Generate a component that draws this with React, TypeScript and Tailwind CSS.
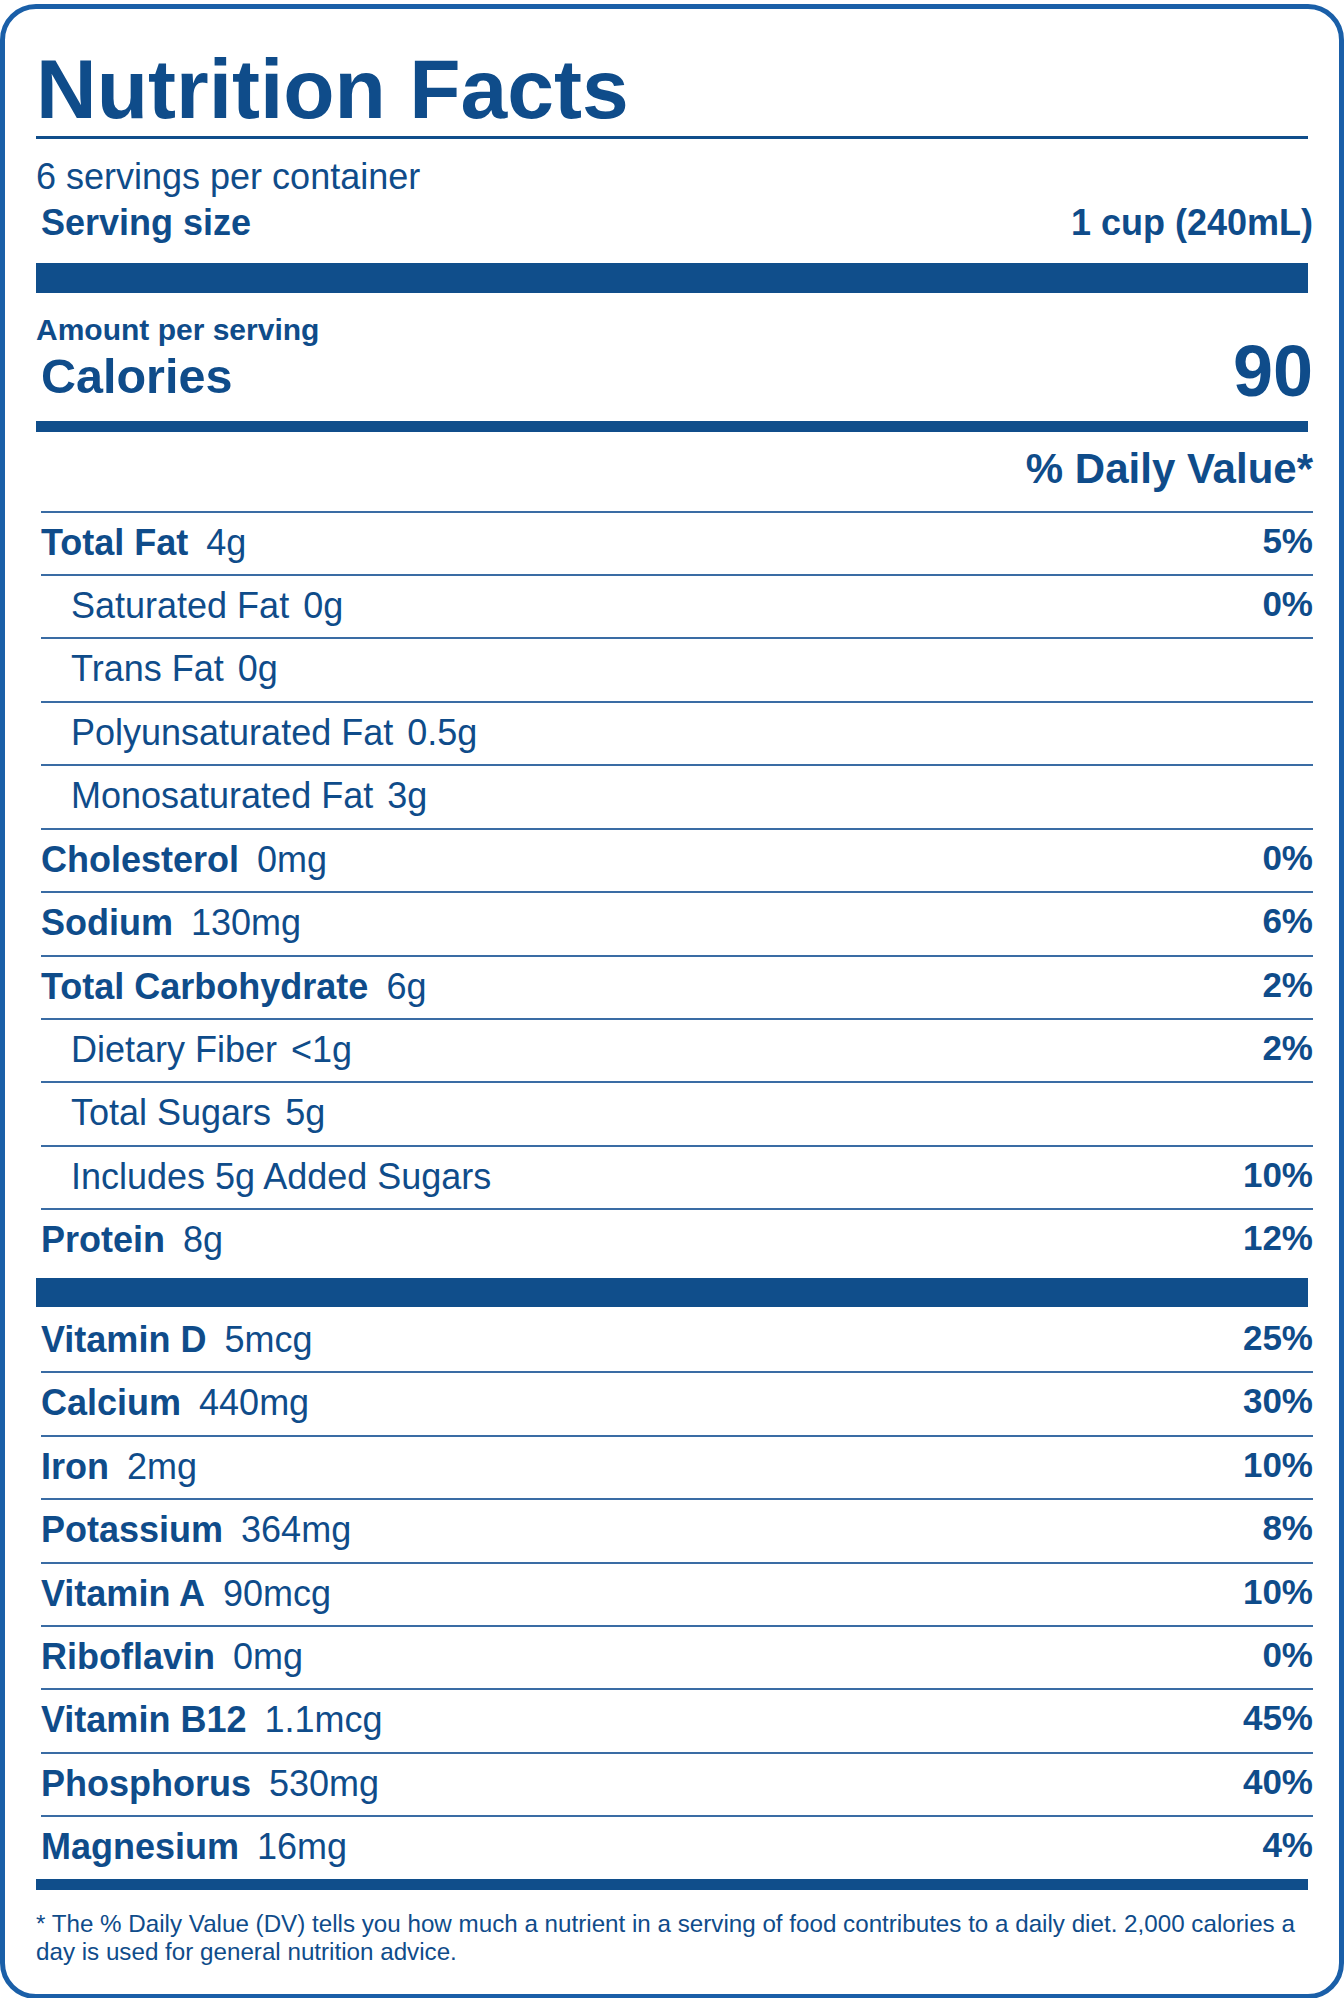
import React from "react";

type Row = { name: string; amt?: string; dv?: string; bold?: boolean; indent?: boolean };

const nutrients: Row[] = [
  { name: "Total Fat", amt: "4g", dv: "5%", bold: true },
  { name: "Saturated Fat", amt: "0g", dv: "0%", indent: true },
  { name: "Trans Fat", amt: "0g", indent: true },
  { name: "Polyunsaturated Fat", amt: "0.5g", indent: true },
  { name: "Monosaturated Fat", amt: "3g", indent: true },
  { name: "Cholesterol", amt: "0mg", dv: "0%", bold: true },
  { name: "Sodium", amt: "130mg", dv: "6%", bold: true },
  { name: "Total Carbohydrate", amt: "6g", dv: "2%", bold: true },
  { name: "Dietary Fiber", amt: "<1g", dv: "2%", indent: true },
  { name: "Total Sugars", amt: "5g", indent: true },
  { name: "Includes 5g Added Sugars", dv: "10%", indent: true },
  { name: "Protein", amt: "8g", dv: "12%", bold: true },
];

const vitamins: Row[] = [
  { name: "Vitamin D", amt: "5mcg", dv: "25%", bold: true },
  { name: "Calcium", amt: "440mg", dv: "30%", bold: true },
  { name: "Iron", amt: "2mg", dv: "10%", bold: true },
  { name: "Potassium", amt: "364mg", dv: "8%", bold: true },
  { name: "Vitamin A", amt: "90mcg", dv: "10%", bold: true },
  { name: "Riboflavin", amt: "0mg", dv: "0%", bold: true },
  { name: "Vitamin B12", amt: "1.1mcg", dv: "45%", bold: true },
  { name: "Phosphorus", amt: "530mg", dv: "40%", bold: true },
  { name: "Magnesium", amt: "16mg", dv: "4%", bold: true },
];

function NRow({ r, last }: { r: Row; last: boolean }) {
  return (
    <div
      className={
        "ml-[5px] -mr-[5px] flex items-start justify-between " +
        (last ? "h-[61.45px]" : "h-[63.45px] border-b-2 border-[#3a6ca4]")
      }
    >
      <div className={"text-[36px] leading-[60px] whitespace-nowrap " + (r.indent ? "pl-[30px]" : "")}>
        {r.bold ? (
          <>
            <span className="font-bold">{r.name}</span> <span className="ml-2">{r.amt}</span>
          </>
        ) : (
          <>
            <span>{r.name}</span>
            {r.amt ? (
              <>
                {" "}
                <span className="ml-[4px]">{r.amt}</span>
              </>
            ) : null}
          </>
        )}
      </div>
      {r.dv ? <div className="text-[35px] leading-[55px] font-bold">{r.dv}</div> : null}
    </div>
  );
}

export default function App() {
  return (
    <div
      className="mt-[4px] w-[1344px] rounded-[36px] border-[5px] border-[#1a5fa8] bg-white px-[31px] pt-[38px] pb-[28px] text-[#0f4c8a]"
      style={{ fontFamily: '"Liberation Sans", Arial, Helvetica, sans-serif' }}
    >
      <h1 className="text-[84px] leading-[84px] font-bold whitespace-nowrap">Nutrition Facts</h1>
      <div className="mt-[5px] h-[3px] bg-[#104e8b]" />
      <div className="mt-[18px] text-[36px] leading-[40px]">6 servings per container</div>
      <div className="ml-[5px] -mr-[5px] mt-[6px] flex justify-between text-[36px] leading-[40px] font-bold">
        <span>Serving size</span>
        <span>1 cup (240mL)</span>
      </div>
      <div className="mt-[20px] h-[30px] bg-[#104e8b]" />
      <div className="mt-[23px] text-[30px] leading-[28px] font-bold">Amount per serving</div>
      <div className="ml-[5px] -mr-[5px] flex items-end justify-between font-bold">
        <span className="text-[48.5px] leading-[44px]">Calories</span>
        <span className="text-[72px] leading-[54px]">90</span>
      </div>
      <div className="mt-[23px] h-[11px] bg-[#104e8b]" />
      <div className="ml-[5px] -mr-[5px] mt-[13px] border-b-2 border-[#3a6ca4] pb-[17.5px] text-right text-[42px] leading-[48px] font-bold">
        % Daily Value*
      </div>
      <div>
        {nutrients.map((r, i) => (
          <NRow key={r.name} r={r} last={i === nutrients.length - 1} />
        ))}
      </div>
      <div className="mt-[6px] h-[29.5px] bg-[#104e8b]" />
      <div className="pt-[2.5px]">
        {vitamins.map((r, i) => (
          <NRow key={r.name} r={r} last={i === vitamins.length - 1} />
        ))}
      </div>
      <div className="h-[11px] bg-[#104e8b]" />
      <p className="mt-[20px] text-[24.2px] leading-[28px]">
        * The % Daily Value (DV) tells you how much a nutrient in a serving of food contributes to a daily diet. 2,000
        calories a day is used for general nutrition advice.
      </p>
    </div>
  );
}
